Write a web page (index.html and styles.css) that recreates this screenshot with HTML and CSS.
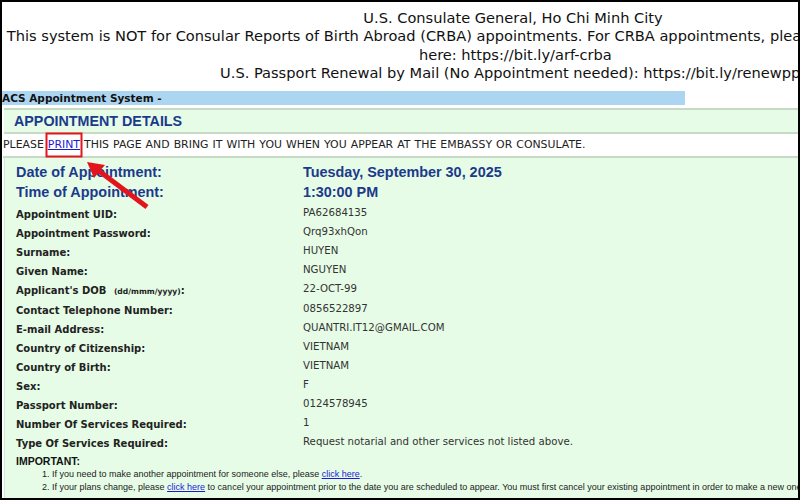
FILE: index.html
```html
<!DOCTYPE html>
<html>
<head>
<meta charset="utf-8">
<title>ACS Appointment System</title>
<link rel="stylesheet" href="styles.css">
</head>
<body>
<div class="frame">
  <div class="top">
    <div class="line">U.S. Consulate General, Ho Chi Minh City</div>
    <div class="line">This system is NOT for Consular Reports of Birth Abroad (CRBA) appointments. For CRBA appointments, please submit your request online</div>
    <div class="line">&nbsp;here: https://bit.ly/arf-crba</div>
    <div class="line">U.S. Passport Renewal by Mail (No Appointment needed): https://bit.ly/renewppt</div>
  </div>
  <div class="sysbar">ACS Appointment System -</div>
  <div class="panel">
    <div class="titlerow">APPOINTMENT DETAILS</div>
    <div class="printrow">PLEASE <a href="#" class="link">PRINT</a> THIS PAGE AND BRING IT WITH YOU WHEN YOU APPEAR AT THE EMBASSY OR CONSULATE.</div>
    <div class="details">
      <div class="bigrow"><span class="biglbl">Date of Appointment:</span><span class="bigval">Tuesday, September 30, 2025</span></div>
      <div class="bigrow"><span class="biglbl">Time of Appointment:</span><span class="bigval">1:30:00 PM</span></div>
      <div class="rows">
        <div class="row"><span class="lbl">Appointment UID:</span><span class="val">PA62684135</span></div>
        <div class="row"><span class="lbl">Appointment Password:</span><span class="val">Qrq93xhQon</span></div>
        <div class="row"><span class="lbl">Surname:</span><span class="val">HUYEN</span></div>
        <div class="row"><span class="lbl">Given Name:</span><span class="val">NGUYEN</span></div>
        <div class="row"><span class="lbl">Applicant's DOB <span class="fmt">(dd/mmm/yyyy)</span>:</span><span class="val">22-OCT-99</span></div>
        <div class="row"><span class="lbl">Contact Telephone Number:</span><span class="val">0856522897</span></div>
        <div class="row"><span class="lbl">E-mail Address:</span><span class="val">QUANTRI.IT12@GMAIL.COM</span></div>
        <div class="row"><span class="lbl">Country of Citizenship:</span><span class="val">VIETNAM</span></div>
        <div class="row"><span class="lbl">Country of Birth:</span><span class="val">VIETNAM</span></div>
        <div class="row"><span class="lbl">Sex:</span><span class="val">F</span></div>
        <div class="row"><span class="lbl">Passport Number:</span><span class="val">0124578945</span></div>
        <div class="row"><span class="lbl">Number Of Services Required:</span><span class="val">1</span></div>
        <div class="row"><span class="lbl">Type Of Services Required:</span><span class="val">Request notarial and other services not listed above.</span></div>
      </div>
      <div class="important">IMPORTANT:</div>
      <div class="item">1. If you need to make another appointment for someone else, please <a href="#" class="link2">click here</a>.</div>
      <div class="item">2. If your plans change, please <a href="#" class="link2">click here</a> to cancel your appointment prior to the date you are scheduled to appear. You must first cancel your existing appointment in order to make a new one.</div>
    </div>
  </div>
  <svg class="annot" width="800" height="500" viewBox="0 0 800 500">
    <rect x="46.5" y="133.5" width="35" height="23" fill="none" stroke="#e3151c" stroke-width="2"/>
    <line x1="99" y1="171" x2="147" y2="207" stroke="#e3151c" stroke-width="5"/>
    <polygon points="87,162 105,165 94,178" fill="#e3151c"/>
  </svg>
</div>
</body>
</html>
```
FILE: styles.css
```css
html, body {
  margin: 0;
  padding: 0;
  background: #fff;
}
.frame {
  position: relative;
  width: 800px;
  height: 500px;
  box-sizing: border-box;
  border: 2px solid #000;
  overflow: hidden;
  background: #fff;
}
.top {
  width: 1022px;
  padding-top: 7px;
  font-family: "DejaVu Sans", Verdana, sans-serif;
  font-size: 14.6px;
  line-height: 18.4px;
  color: #111;
  text-align: center;
}
.line {
  white-space: nowrap;
}
.sysbar {
  margin-top: 8.4px;
  width: 683px;
  height: 14px;
  background: #acd5f2;
  font-family: "DejaVu Sans", Verdana, sans-serif;
  font-weight: bold;
  font-size: 10.5px;
  line-height: 14px;
  color: #111;
  white-space: nowrap;
}
.panel {
  margin-top: 3px;
  margin-left: 2px;
}
.titlerow {
  background: #e6fce6;
  border-top: 2px solid #c6dac6;
  border-bottom: 2px solid #c6dac6;
  height: 22px;
  line-height: 22px;
  padding-left: 10px;
  font-family: "Liberation Sans", Arial, sans-serif;
  font-weight: bold;
  font-size: 14.3px;
  color: #1b3a8c;
}
.printrow {
  background: #fff;
  border-bottom: 2px solid #c6dac6;
  height: 22px;
  line-height: 22px;
  margin-left: -1px;
  font-family: "DejaVu Sans", Verdana, sans-serif;
  font-size: 10.9px;
  word-spacing: 0.6px;
  color: #222;
  white-space: nowrap;
}
.link {
  color: #1a1ad6;
  text-decoration: underline;
}
.details {
  background: #e6fce6;
  border-left: 1px solid #d2e6d2;
  padding: 4px 0 20px 11px;
  height: 400px;
}
.bigrow {
  display: flex;
  height: 20px;
  align-items: center;
  font-family: "Liberation Sans", Arial, sans-serif;
  font-weight: bold;
  font-size: 14.4px;
  color: #1b3a8c;
  white-space: nowrap;
}
.biglbl {
  width: 287px;
}
.rows {
  margin-top: 3px;
}
.row {
  display: flex;
  height: 19.1px;
  align-items: center;
  white-space: nowrap;
}
.lbl {
  width: 287px;
  font-family: "DejaVu Sans", Verdana, sans-serif;
  font-weight: bold;
  font-size: 10px;
  color: #222;
}
.fmt {
  font-size: 7.6px;
  margin-left: 4px;
}
.val {
  font-family: "DejaVu Sans", Verdana, sans-serif;
  font-size: 10.2px;
  color: #333;
  margin-top: -4px;
}
.important {
  height: 15px;
  line-height: 16px;
  font-family: "Liberation Sans", Arial, sans-serif;
  font-weight: bold;
  font-size: 10.5px;
  color: #111;
}
.item {
  height: 13px;
  line-height: 13px;
  padding-left: 26px;
  font-family: "Liberation Sans", Arial, sans-serif;
  font-size: 9px;
  color: #222;
  white-space: nowrap;
}
.link2 {
  color: #1a1ad6;
  text-decoration: underline;
}
.annot {
  position: absolute;
  left: -2px;
  top: -2px;
  pointer-events: none;
}
```
